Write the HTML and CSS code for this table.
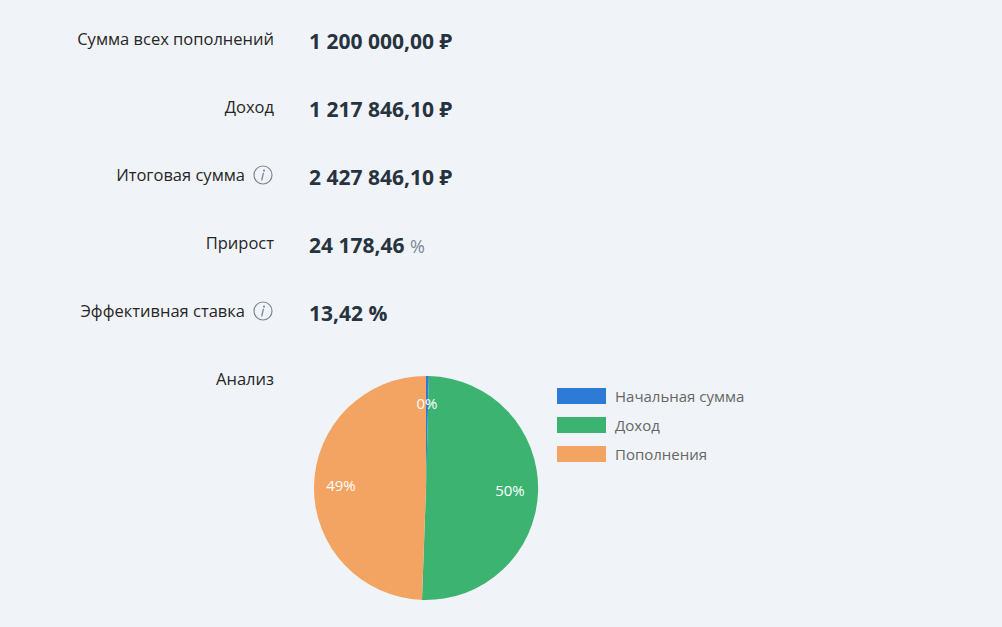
FILE: index.html
```html
<!DOCTYPE html>
<html lang="ru">
<head>
<meta charset="utf-8">
<title>Результаты</title>
<link rel="stylesheet" href="styles.css">
</head>
<body>
<div class="results">
  <div class="label">Сумма всех пополнений</div>
  <div class="value">1 200 000,00 ₽</div>

  <div class="label">Доход</div>
  <div class="value">1 217 846,10 ₽</div>

  <div class="label">Итоговая сумма
    <svg class="info" viewBox="0 0 20 20" width="20" height="20"><circle cx="10" cy="10" r="9" fill="none" stroke="#7d8794" stroke-width="1.2"/><circle cx="11" cy="5.6" r="1.05" fill="#7d8794"/><path d="M10.3 8.3 L8.8 14.8" stroke="#7d8794" stroke-width="1.35" stroke-linecap="round" fill="none"/></svg>
  </div>
  <div class="value">2 427 846,10 ₽</div>

  <div class="label">Прирост</div>
  <div class="value">24 178,46 <span class="unit">%</span></div>

  <div class="label">Эффективная ставка
    <svg class="info" viewBox="0 0 20 20" width="20" height="20"><circle cx="10" cy="10" r="9" fill="none" stroke="#7d8794" stroke-width="1.2"/><circle cx="11" cy="5.6" r="1.05" fill="#7d8794"/><path d="M10.3 8.3 L8.8 14.8" stroke="#7d8794" stroke-width="1.35" stroke-linecap="round" fill="none"/></svg>
  </div>
  <div class="value">13,42 %</div>

  <div class="label">Анализ</div>
  <div class="chart">
    <svg class="pie" viewBox="0 0 240 240" width="240" height="240">
      <path d="M117,120 L117,8 A112,112 0 0 1 119.89,8.04 Z" fill="#2e7bd6"/>
      <path d="M117,120 L119.89,8.04 A112,112 0 1 1 113.0,231.93 Z" fill="#3cb371"/>
      <path d="M117,120 L113.0,231.93 A112,112 0 0 1 117,8 Z" fill="#f4a462"/>
      <text x="118" y="41" class="slice-label">0%</text>
      <text x="201" y="128" class="slice-label">50%</text>
      <text x="32" y="123" class="slice-label">49%</text>
    </svg>
    <ul class="legend">
      <li><span class="swatch blue"></span>Начальная сумма</li>
      <li><span class="swatch green"></span>Доход</li>
      <li><span class="swatch orange"></span>Пополнения</li>
    </ul>
  </div>
</div>
</body>
</html>
```
FILE: styles.css
```css
html, body {
  margin: 0;
  padding: 0;
  background: #f0f4f8;
}
body {
  font-family: "Open Sans", "Noto Sans", sans-serif;
  color: #333;
  min-height: 627px;
}
.results {
  display: grid;
  grid-template-columns: 274px 1fr;
  grid-template-rows: repeat(5, 68px) auto;
  column-gap: 35px;
  padding-top: 27px;
}
.label {
  font-size: 16.5px;
  line-height: 24px;
  text-align: right;
  color: #262626;
  display: flex;
  justify-content: flex-end;
  align-items: center;
  align-self: start;
  gap: 8px;
}
.info {
  display: block;
  margin-right: 1px;
  flex: none;
}
.value {
  font-size: 21px;
  line-height: 28px;
  font-weight: 700;
  color: #27333f;
  align-self: start;
}
.unit {
  font-weight: 400;
  font-size: 18px;
  color: #7b8895;
}
.chart {
  display: flex;
  align-items: flex-start;
  height: 240px;
  margin-top: 1px;
}
.pie {
  display: block;
  flex: none;
}
.slice-label {
  fill: #fff;
  font-family: "Open Sans", sans-serif;
  font-size: 15px;
  text-anchor: middle;
}
.legend {
  list-style: none;
  margin: 18px 0 0 8px;
  padding: 0;
  display: flex;
  flex-direction: column;
  gap: 9px;
}
.legend li {
  display: flex;
  align-items: center;
  gap: 9px;
  font-size: 15px;
  line-height: 20px;
  color: #666;
}
.swatch {
  display: inline-block;
  width: 49px;
  height: 16px;
}
.swatch.blue { background: #2e7bd6; }
.swatch.green { background: #3cb371; }
.swatch.orange { background: #f4a462; }
```
